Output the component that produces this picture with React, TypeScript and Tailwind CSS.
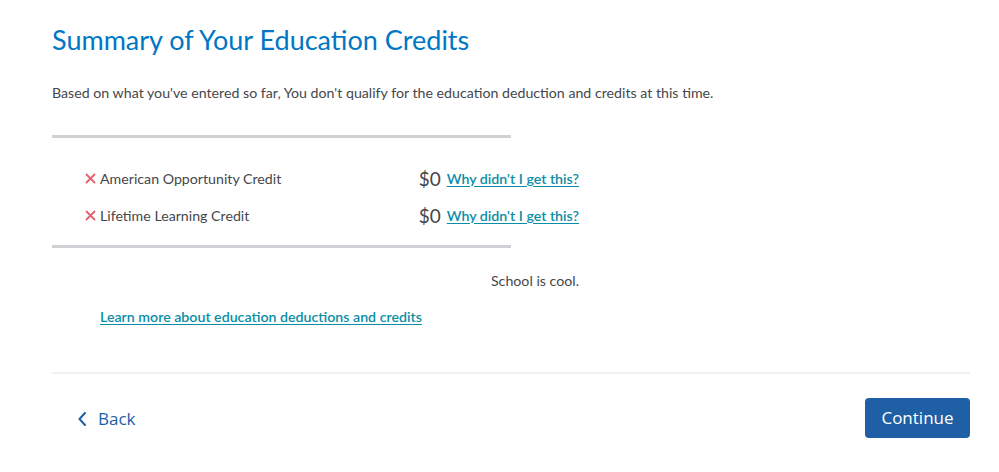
import React from "react";

const font = { fontFamily: "Lato, 'Noto Sans', sans-serif" };

function XIcon() {
  return (
    <svg width="11" height="11" viewBox="0 0 11 11" className="shrink-0">
      <path d="M1.5 1.5 L9.5 9.5 M9.5 1.5 L1.5 9.5" stroke="#e5606d" strokeWidth="1.8" strokeLinecap="round" />
    </svg>
  );
}

function Row({ label }: { label: string }) {
  return (
    <div className="flex items-center h-[37px]">
      <div className="flex items-center gap-[4px] pl-[33px] text-[14.2px] text-[#45474a]">
        <XIcon />
        <span>{label}</span>
      </div>
      <span className="text-[19px] font-normal text-[#45474a] ml-auto leading-none">$0</span>
      <a href="#" className="ml-[6px] whitespace-nowrap text-[14.2px] font-semibold text-[#0a8ea8] underline underline-offset-2">
        Why didn't I get this?
      </a>
    </div>
  );
}

export default function App() {
  return (
    <div className="w-[999px] h-[472px] bg-white" style={font}>
      <div className="pl-[52px] pr-[29px] pt-[24px]">
        <h1 className="text-[27px] leading-[32px] text-[#0077c5] font-normal">Summary of Your Education Credits</h1>
        <p className="mt-[27px] text-[14.2px] leading-[20px] text-[#45474a]">
          Based on what you've entered so far, You don't qualify for the education deduction and credits at this time.
        </p>
        <div className="w-[527px] mt-[32px]">
          <div className="w-[459px] h-[3px] bg-[#cfd1d4]" />
          <div className="pt-[22px] pb-[11px]">
            <Row label="American Opportunity Credit" />
            <Row label="Lifetime Learning Credit" />
          </div>
          <div className="w-[459px] h-[3px] bg-[#cfd1d4]" />
          <div className="text-right mt-[23px] text-[14.2px] leading-[20px] text-[#45474a]">School is cool.</div>
        </div>
        <div className="mt-[15px] pl-[48px] leading-[20px]">
          <a href="#" className="text-[14.2px] font-semibold text-[#0a8ea8] underline underline-offset-2">
            Learn more about education deductions and credits
          </a>
        </div>
        <div className="mt-[45px] h-[2px] bg-[#f0f0f0]" />
        <div className="flex items-center justify-between mt-[24px]">
          <a href="#" className="flex items-center gap-[12px] ml-[26px] mt-[2px] text-[17px] text-[#1d5ea6]" style={{ fontFamily: "'Open Sans', sans-serif" }}>
            <svg width="8" height="14" viewBox="0 0 8 14">
              <path d="M7 1 L1.5 7 L7 13" stroke="#1d5ea6" strokeWidth="2" fill="none" strokeLinecap="round" strokeLinejoin="round" />
            </svg>
            Back
          </a>
          <button className="w-[105px] h-[40px] rounded-[4px] bg-[#1f5fa5] text-white text-[17px]" style={{ fontFamily: "'Open Sans', sans-serif" }}>
            Continue
          </button>
        </div>
      </div>
    </div>
  );
}
